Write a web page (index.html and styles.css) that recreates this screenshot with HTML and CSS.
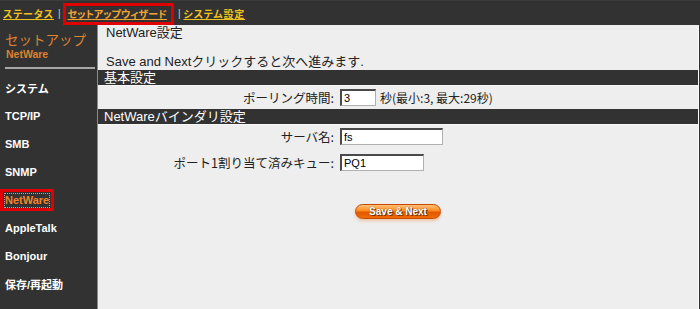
FILE: index.html
```html
<html>
<head>
  <meta charset="utf-8">
  <title>NetWare設定</title>
  <link rel="stylesheet" href="styles.css">
</head>
<body>
  <div id="topnav">
    <a class="nav-link" href="#">ステータス</a>
    <span class="sep">|</span>
    <span class="mark-top"><a class="nav-link current" href="#">セットアップウィザード</a></span>
    <span class="sep">|</span>
    <a class="nav-link" href="#">システム設定</a>
  </div>

  <div id="page">
    <div id="sidebar">
      <div class="side-title">セットアップ</div>
      <div class="side-sub">NetWare</div>
      <div class="side-line"></div>
      <ul class="menu">
        <li>システム</li>
        <li>TCP/IP</li>
        <li>SMB</li>
        <li>SNMP</li>
        <li class="active"><span class="mark-side"><span class="focus">NetWare</span></span></li>
        <li>AppleTalk</li>
        <li>Bonjour</li>
        <li>保存/再起動</li>
      </ul>
    </div>

    <div id="main">
      <div class="intro">
        <p class="title">NetWare設定</p>
        <p class="note">Save and Nextクリックすると次へ進みます.</p>
      </div>

      <div class="bar">基本設定</div>
      <div class="box">
        <div class="form-row">
          <label class="lbl">ポーリング時間:</label>
          <div class="field"><input class="txt w-poll" value="3"> <span class="hint">秒(最小:3, 最大:29秒)</span></div>
        </div>
      </div>

      <div class="bar">NetWareバインダリ設定</div>
      <div class="box last">
        <div class="form-row">
          <label class="lbl">サーバ名:</label>
          <div class="field"><input class="txt w-server" value="fs"></div>
        </div>
        <div class="form-row">
          <label class="lbl">ポート1割り当て済みキュー:</label>
          <div class="field"><input class="txt w-queue" value="PQ1"></div>
        </div>
        <div class="actions">
          <button class="btn-next" type="button">Save &amp; Next</button>
        </div>
      </div>
    </div>
  </div>
</body>
</html>
```

FILE: styles.css
```css
body {
  margin: 0;
  padding: 0;
  width: 700px;
  height: 309px;
  overflow: hidden;
  background: #323232;
  color: #222;
  font: 400 13px "Liberation Sans", "Noto Sans CJK JP", sans-serif;
}

p {
  margin: 0;
}

/* top links */

#topnav {
  height: 25px;
  display: flex;
  align-items: center;
  padding-left: 3px;
  box-sizing: border-box;
  border-top: 1px solid #3c3c3c;
}

.nav-link {
  color: #f0c21e;
  font: 700 10px "Noto Sans CJK JP", sans-serif;
  font-feature-settings: "palt";
  letter-spacing: 0.8px;
  text-decoration: underline;
}

.nav-link.current {
  color: #f3a532;
  letter-spacing: 0;
}

.sep {
  color: #cfcfcf;
  font-size: 10px;
  padding: 0 3px 0 4px;
}

.mark-top {
  display: flex;
  align-items: center;
  height: 22px;
  box-sizing: border-box;
  border: 3px solid #e00000;
  padding: 0 4px 0 1px;
  margin-top: 1px;
}

/* side menu */

#page {
  display: flex;
  height: 284px;
}

#sidebar {
  width: 97px;
  flex: none;
}

.side-title {
  color: #dd8230;
  font: 400 13.5px/18px "Noto Sans CJK JP", sans-serif;
  white-space: nowrap;
  padding: 5px 0 0 5px;
}

.side-sub {
  color: #dd8230;
  font: 700 10.5px/13px "Liberation Sans", sans-serif;
  padding-left: 6px;
}

.side-line {
  height: 2px;
  background: #a8a8a8;
  margin: 6px 2px 0 5px;
}

.menu {
  list-style: none;
  margin: 5px 0 0 0;
  padding: 0;
}

.menu li {
  height: 28px;
  display: flex;
  align-items: center;
  padding-left: 5px;
  color: #fff;
  font: 700 11px "Liberation Sans", "Noto Sans CJK JP", sans-serif;
}

.menu li.active {
  padding-left: 0;
}

.mark-side {
  display: flex;
  align-items: center;
  height: 22px;
  box-sizing: border-box;
  border: 3px solid #e00000;
  padding: 0 2px;
}

.focus {
  color: #f0862c;
  outline: 1px dotted #aaa;
  line-height: 13px;
}

/* content */

#main {
  flex: 1;
  display: flex;
  flex-direction: column;
  margin-right: 1px;
  border-left: 1px solid #8a8a8a;
  border-right: 1px solid #fafafa;
}

.intro {
  background: #eeeeee;
  height: 45px;
  padding-left: 8px;
  box-sizing: border-box;
}

.title, .note {
  line-height: 16px;
}

.note {
  margin-top: 13px;
}

.bar {
  height: 15px;
  line-height: 15px;
  color: #fff;
  padding-left: 6px;
  background: #323232;
}

.box {
  background: #eeeeee;
  height: 24px;
  display: flex;
  flex-direction: column;
  justify-content: center;
  border-top: 1px solid #f8f8f8;
  box-sizing: border-box;
}

.box.last {
  flex: 1;
  justify-content: flex-start;
  padding-top: 2px;
}

.form-row {
  display: grid;
  grid-template-columns: 236px auto;
  column-gap: 6px;
  align-items: center;
}

.box.last .form-row {
  margin-bottom: 7px;
}

.lbl {
  text-align: right;
  font-family: "Noto Sans CJK JP", sans-serif;
  font-size: 12.5px;
}

.field {
  display: flex;
  align-items: center;
}

.txt {
  height: 17px;
  box-sizing: border-box;
  border-style: solid;
  border-width: 2px 1px 1px 2px;
  border-color: #4a4a4a #b0b0b0 #b0b0b0 #4a4a4a;
  background: #fff;
  padding: 0 2px;
  font: 400 11px "Liberation Sans", sans-serif;
  color: #000;
}

.w-poll {
  width: 36px;
}

.w-server {
  width: 103px;
}

.w-queue {
  width: 84px;
}

.hint {
  margin-left: 4px;
  font-family: "Noto Sans CJK JP", sans-serif;
  font-size: 12px;
}

.actions {
  display: flex;
  justify-content: center;
  margin-top: 25px;
}

.btn-next {
  width: 86px;
  height: 15px;
  padding: 0;
  border: 1px solid #c44a00;
  border-radius: 8px;
  background: linear-gradient(#ffc27a, #ff8a1e 45%, #e25800 55%, #f06a0a);
  box-shadow: 0 2px 3px rgba(240, 120, 40, 0.35);
  color: #fff;
  font: 700 10px "Liberation Sans", sans-serif;
  text-shadow: 0 0 1px #5a2a00, 1px 1px 0 #7a3400;
  cursor: pointer;
}
```
